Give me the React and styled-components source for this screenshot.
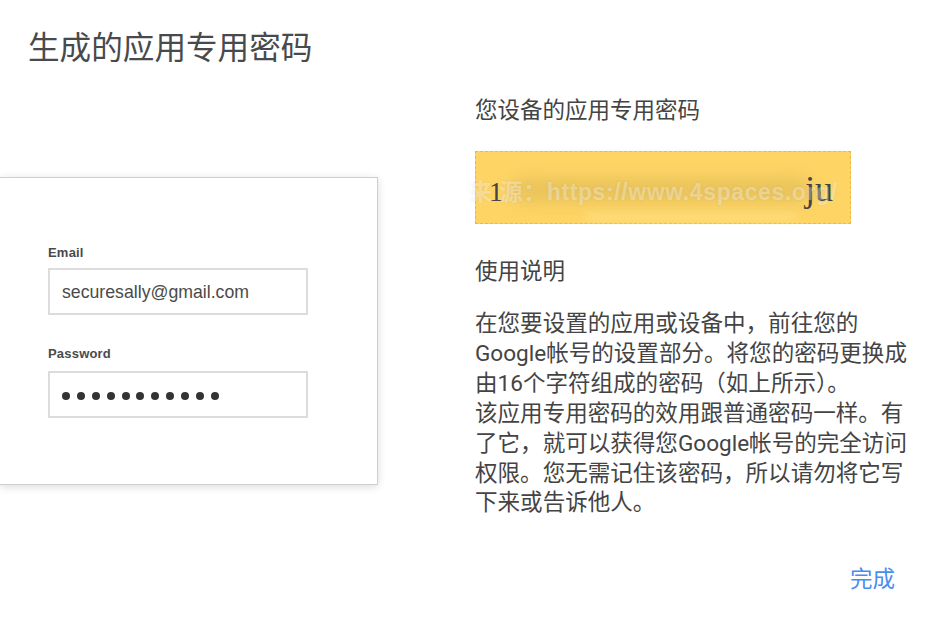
import styled, { createGlobalStyle } from "styled-components";

const GlobalStyle = createGlobalStyle`
  html, body {
    margin: 0;
    padding: 0;
    background: #fff;
  }
  body {
    font-family: Roboto, "Noto Sans CJK SC", sans-serif;
  }
`;

const Page = styled.div`
  width: 950px;
  height: 630px;
  overflow: hidden;
  display: flex;
  flex-direction: column;
  color: #444;
`;

const Title = styled.h1`
  margin: 0;
  padding: 27px 0 0 28px;
  font-size: 31.6px;
  line-height: 44px;
  font-weight: 400;
  color: #484a4d;
`;

const Columns = styled.div`
  display: flex;
  align-items: flex-start;
`;

const LeftColumn = styled.div`
  width: 378px;
  padding-top: 106px;
  flex: none;
`;

const Card = styled.div`
  height: 308px;
  box-sizing: border-box;
  padding-top: 67px;
  padding-left: 48px;
  background: #fff;
  border: 1px solid #cfcfcf;
  border-left: none;
  box-shadow: 0 2px 8px rgba(0, 0, 0, 0.14);
`;

const FieldLabel = styled.div`
  font-family: "Liberation Sans", Arial, sans-serif;
  font-size: 13px;
  font-weight: 700;
  line-height: 16px;
  color: #4a4a4a;
  letter-spacing: 0.2px;
`;

const Input = styled.div`
  width: 260px;
  height: 47px;
  margin-top: ${(p) => p.$top}px;
  box-sizing: border-box;
  display: flex;
  align-items: center;
  padding: 2px 0 0 12px;
  border: 2px solid #dcdcdc;
  font-family: "Liberation Sans", Arial, sans-serif;
  font-size: 17.7px;
  color: #4a4a4a;
`;

const Field = styled.div`
  margin-bottom: ${(p) => p.$gap || 0}px;
`;

const Dots = styled.div`
  display: flex;
  gap: 6.9px;
`;

const Dot = styled.span`
  width: 8px;
  height: 8px;
  border-radius: 50%;
  background: #333;
`;

const RightColumn = styled.div`
  margin-left: 97px;
  width: 440px;
  padding-top: 24px;
  display: flex;
  flex-direction: column;
  align-items: flex-start;
`;

const Subheading = styled.div`
  font-size: 22.5px;
  line-height: 30px;
  color: #444;
  margin-top: ${(p) => p.$top || 0}px;
`;

const PasswordBox = styled.div`
  position: relative;
  width: 376px;
  height: 73px;
  margin-top: 26px;
  box-sizing: border-box;
  background: #fed565;
  border: 1px dashed #eab94c;
  font-family: "Liberation Serif", serif;
  font-size: 36px;
  color: #444;
`;

const Smudge = styled.div`
  position: absolute;
  left: 35px;
  top: 26px;
  width: 300px;
  height: 24px;
  border-radius: 14px;
  background: #e2bd58;
  filter: blur(9px);
  opacity: 0.8;
`;

const Highlight = styled.div`
  position: absolute;
  left: 110px;
  bottom: 4px;
  width: 210px;
  height: 5px;
  background: #ffe18a;
  filter: blur(4px);
`;

const CodeStart = styled.span`
  position: absolute;
  left: 13px;
  top: 22px;
  line-height: 36px;
  font-size: 28px;
`;

const CodeEnd = styled.span`
  position: absolute;
  right: 17px;
  top: 18px;
  line-height: 38px;
`;

const Watermark = styled.div`
  position: absolute;
  left: -7px;
  top: 25px;
  white-space: nowrap;
  font-family: "Liberation Sans", "Noto Sans CJK SC", sans-serif;
  font-size: 23px;
  line-height: 30px;
  font-weight: 700;
  letter-spacing: 0.6px;
  color: rgba(255, 255, 255, 0.32);
  text-shadow: 0 0 3px rgba(120, 120, 120, 0.12);
`;

const Paragraph = styled.p`
  margin: 23px 0 0;
  font-size: 22.55px;
  line-height: 29.9px;
  color: #444;
`;

const Footer = styled.div`
  align-self: flex-end;
  margin: 46px 20px 0 0;
  font-size: 22.5px;
  line-height: 30px;
  color: #4a8cf0;
`;

export default function App() {
  return (
    <Page>
      <GlobalStyle />
      <Title>生成的应用专用密码</Title>
      <Columns>
        <LeftColumn>
          <Card>
            <Field $gap={31}>
              <FieldLabel>Email</FieldLabel>
              <Input $top={7}>securesally@gmail.com</Input>
            </Field>
            <Field>
              <FieldLabel>Password</FieldLabel>
              <Input $top={9}>
                <Dots>
                  {Array.from({ length: 11 }).map((_, i) => (
                    <Dot key={i} />
                  ))}
                </Dots>
              </Input>
            </Field>
          </Card>
        </LeftColumn>
        <RightColumn>
          <Subheading>您设备的应用专用密码</Subheading>
          <PasswordBox>
            <Smudge />
            <Highlight />
            <CodeStart>1</CodeStart>
            <CodeEnd>ju</CodeEnd>
            <Watermark>来 源：https://www.4spaces.org/</Watermark>
          </PasswordBox>
          <Subheading $top={32}>使用说明</Subheading>
          <Paragraph>
            在您要设置的应用或设备中，前往您的
            <br />
            Google帐号的设置部分。将您的密码更换成
            <br />
            由16个字符组成的密码（如上所示）。
            <br />
            该应用专用密码的效用跟普通密码一样。有
            <br />
            了它，就可以获得您Google帐号的完全访问
            <br />
            权限。您无需记住该密码，所以请勿将它写
            <br />
            下来或告诉他人。
          </Paragraph>
          <Footer>完成</Footer>
        </RightColumn>
      </Columns>
    </Page>
  );
}
